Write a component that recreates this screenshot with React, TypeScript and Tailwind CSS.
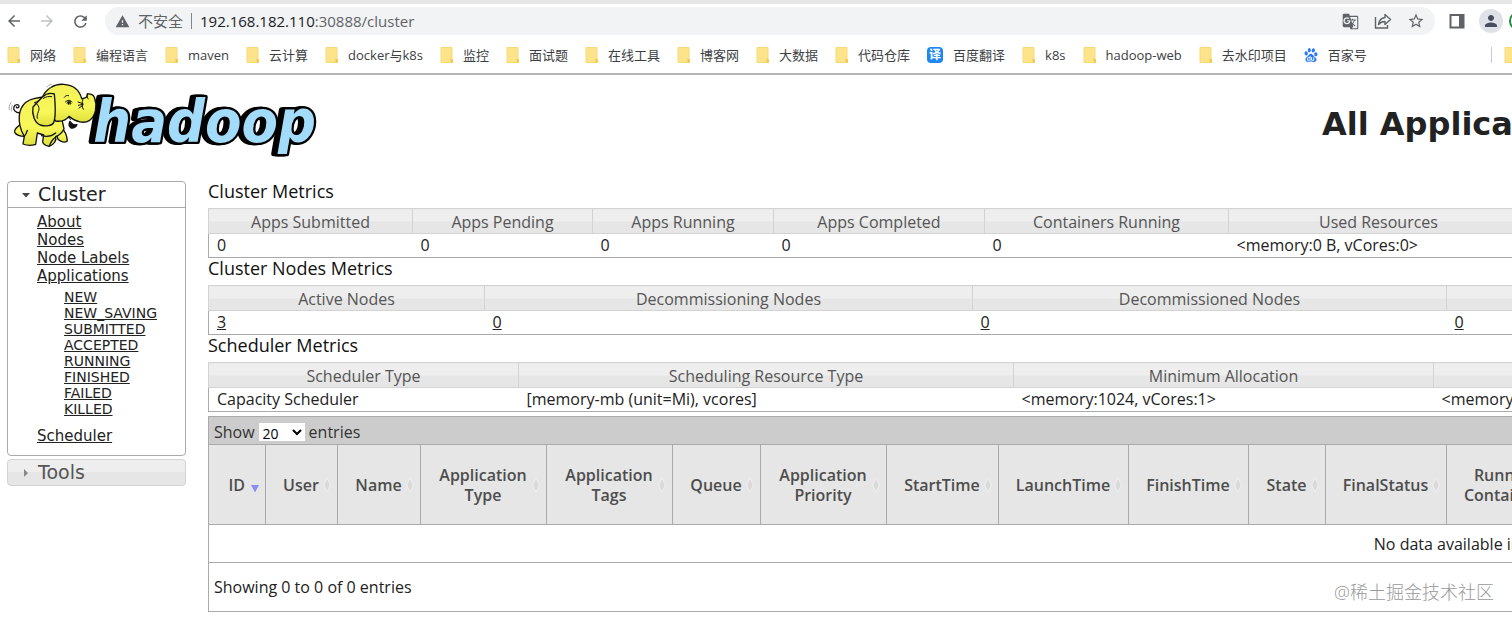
import type { ReactNode } from "react";
import clsx from "clsx";
import {
  MdArrowBack,
  MdArrowForward,
  MdGTranslate,
  MdPerson,
  MdRefresh,
  MdStarBorder,
  MdWarning,
} from "react-icons/md";
import { SiBaidu } from "react-icons/si";

type Bookmark = { label: string; icon?: "folder" | "translate" | "baidu" };

const bookmarks: Bookmark[] = [
  { label: "网络" },
  { label: "编程语言" },
  { label: "maven" },
  { label: "云计算" },
  { label: "docker与k8s" },
  { label: "监控" },
  { label: "面试题" },
  { label: "在线工具" },
  { label: "博客网" },
  { label: "大数据" },
  { label: "代码仓库" },
  { label: "百度翻译", icon: "translate" },
  { label: "k8s" },
  { label: "hadoop-web" },
  { label: "去水印项目" },
  { label: "百家号", icon: "baidu" },
];

const appStates = [
  "NEW",
  "NEW_SAVING",
  "SUBMITTED",
  "ACCEPTED",
  "RUNNING",
  "FINISHED",
  "FAILED",
  "KILLED",
];

type Column = { label: string; width: string; value?: string; link?: boolean };

const clusterMetrics: Column[] = [
  { label: "Apps Submitted", width: "w-[204px]", value: "0" },
  { label: "Apps Pending", width: "w-[180px]", value: "0" },
  { label: "Apps Running", width: "w-[181px]", value: "0" },
  { label: "Apps Completed", width: "w-[211px]", value: "0" },
  { label: "Containers Running", width: "w-[244px]", value: "0" },
  { label: "Used Resources", width: "w-[300px]", value: "<memory:0 B, vCores:0>" },
  { label: "", width: "w-auto" },
];

const nodeMetrics: Column[] = [
  { label: "Active Nodes", width: "w-[276px]", value: "3", link: true },
  { label: "Decommissioning Nodes", width: "w-[488px]", value: "0", link: true },
  { label: "Decommissioned Nodes", width: "w-[474px]", value: "0", link: true },
  { label: "", width: "w-auto", value: "0", link: true },
];

const schedulerMetrics: Column[] = [
  { label: "Scheduler Type", width: "w-[310px]", value: "Capacity Scheduler" },
  {
    label: "Scheduling Resource Type",
    width: "w-[495px]",
    value: "[memory-mb (unit=Mi), vcores]",
  },
  {
    label: "Minimum Allocation",
    width: "w-[420px]",
    value: "<memory:1024, vCores:1>",
  },
  { label: "", width: "w-auto", value: "<memory:8192, vCores:4>" },
];

const appColumns: Column[] = [
  { label: "ID", width: "w-[56px]" },
  { label: "User", width: "w-[72px]" },
  { label: "Name", width: "w-[83px]" },
  { label: "Application Type", width: "w-[126px]" },
  { label: "Application Tags", width: "w-[126px]" },
  { label: "Queue", width: "w-[88px]" },
  { label: "Application Priority", width: "w-[126px]" },
  { label: "StartTime", width: "w-[112px]" },
  { label: "LaunchTime", width: "w-[130px]" },
  { label: "FinishTime", width: "w-[120px]" },
  { label: "State", width: "w-[77px]" },
  { label: "FinalStatus", width: "w-[121px]" },
  { label: "Running Containers", width: "w-[120px]" },
  { label: "", width: "w-auto" },
];

function FolderIcon() {
  return (
    <svg viewBox="0 0 13 16" className="h-4 w-[13px] shrink-0">
      <path d="M1 .5h11v14l.5 1H1z" fill="#fde38a" stroke="#f7d978" />
      <path d="M10.500 15.500v-4l2.500 1v3z" fill="#f2c94c" />
    </svg>
  );
}

function ShareIcon() {
  return (
    <svg viewBox="0 0 18 18" className="size-[18px]" fill="none" stroke="#5f6368" strokeWidth="1.4">
      <path d="M1.500 5v11h12v-3" />
      <path d="M4.500 12.500c.5-4 2.500-6.500 6.500-7V2.500l5.500 5-5.500 5V9.500c-3 0-5 1-6.500 3z" strokeLinejoin="round" />
    </svg>
  );
}

function SidePanelIcon() {
  return (
    <svg viewBox="0 0 16 16" className="size-4">
      <rect x="1.500" y="2" width="13" height="12.500" fill="none" stroke="#5f6368" strokeWidth="2" />
      <path d="M10 2h5v12h-5z" fill="#5f6368" />
    </svg>
  );
}

function Toolbar() {
  return (
    <div className="flex h-[34px] items-center text-[#5f6368]">
      <div className="flex shrink-0 items-center gap-[15px] pr-[15px] pl-[5px]">
        <button aria-label="Back">
          <MdArrowBack className="size-[18px]" />
        </button>
        <button aria-label="Forward" className="text-[#bdc1c6]">
          <MdArrowForward className="size-[18px]" />
        </button>
        <button aria-label="Reload">
          <MdRefresh className="size-[19px]" />
        </button>
      </div>
      <div className="flex h-7 min-w-0 flex-1 items-center rounded-full bg-[#f1f3f4] pr-2.5 pl-2.5">
        <MdWarning className="size-[15px] shrink-0" />
        <span className="ml-2 text-[15px] whitespace-nowrap">不安全</span>
        <span className="mx-2 h-4 w-px shrink-0 bg-[#80868b]" />
        <span className="flex-1 text-[15px] whitespace-nowrap">
          <span className="text-[#202124]">192.168.182.110</span>:30888/cluster
        </span>
        <div className="flex items-center gap-[15px]">
          <button aria-label="Translate">
            <MdGTranslate className="size-[17px]" />
          </button>
          <button aria-label="Share">
            <ShareIcon />
          </button>
          <button aria-label="Bookmark">
            <MdStarBorder className="size-[18px]" />
          </button>
        </div>
      </div>
      <div className="ml-3.5 flex shrink-0 items-center">
        <button aria-label="Side panel">
          <SidePanelIcon />
        </button>
        <button
          aria-label="Profile"
          className="ml-3.5 flex size-6 items-center justify-center rounded-full bg-[#dee1e8] text-[#474d5c]"
        >
          <MdPerson className="size-[18px]" />
        </button>
        <span className="ml-1.5 flex w-[3px] overflow-hidden">
          <span className="size-5 shrink-0 rounded-full border-2 border-[#1e8e3e]" />
        </span>
      </div>
    </div>
  );
}

function BookmarkIcon({ icon }: { icon?: Bookmark["icon"] }) {
  if (icon === "translate") {
    return (
      <span className="flex size-4 items-center justify-center rounded-sm bg-[#1e88f0] text-xs font-bold text-white">
        译
      </span>
    );
  }
  if (icon === "baidu") {
    return <SiBaidu className="size-[14px] text-[#2a7cf0]" />;
  }
  return <FolderIcon />;
}

function BookmarksBar() {
  return (
    <nav className="flex h-[37px] items-center border-b-2 border-[#b4b4b4] pb-0.5 pl-[7px]">
      <div className="flex min-w-0 flex-1 items-center gap-[17px] overflow-hidden">
        {bookmarks.map(({ label, icon }) => (
          <a
            key={label}
            href="#"
            className="flex items-center gap-2.5 text-[13px] leading-5 whitespace-nowrap text-[#3c4043]"
          >
            <BookmarkIcon icon={icon} />
            {label}
          </a>
        ))}
      </div>
      <span className="h-4 w-px shrink-0 bg-[#c8cbd0]" />
      <span className="ml-3 flex w-2 shrink-0 overflow-hidden">
        <FolderIcon />
      </span>
    </nav>
  );
}

function HadoopLogo() {
  return (
    <svg viewBox="0 0 990 270" className="h-[90px] w-[330px] shrink-0" role="img" aria-label="hadoop">
      <defs>
        <linearGradient id="hide" x1="0" y1="0" x2="0" y2="1">
          <stop offset="0" stopColor="#f2f25a" />
          <stop offset="0.6" stopColor="#f7f858" />
          <stop offset="1" stopColor="#dfe03c" />
        </linearGradient>
        <filter id="extrude" x="-10%" y="-10%" width="120%" height="120%">
          <feDropShadow dx="-6" dy="0" stdDeviation="0" floodColor="#000" />
          <feDropShadow dx="-6" dy="0" stdDeviation="0" floodColor="#000" />
        </filter>
      </defs>
      <text
        x="280"
        y="201"
        fontFamily="DejaVu Sans Condensed, DejaVu Sans"
        fontWeight="bold"
        fontStyle="italic"
        fontSize="177"
        fill="#a3dbfb"
        stroke="#000"
        strokeWidth="14"
        strokeLinejoin="round"
        paintOrder="stroke"
        filter="url(#extrude)"
      >
        hadoop
      </text>
      <g fill="url(#hide)" stroke="#111" strokeWidth="4" strokeLinejoin="round" strokeLinecap="round">
        <path d="M60 114c-14-1-22-10-18-19 3-8 15-8 15-1 0 5-7 6-8 2" fill="none" />
        <path d="M183 155c12 12 18 28 19 43-8 6-20 3-28-5l-8-30z" />
        <path d="M62 148c-10 6-21 17-18 24 5 8 17 12 30 12l10-20z" />
        <path d="M60 152c-8-38 3-72 42-81 25-6 52-5 70 4l20 86c-5 12-14 19-25 24 3 11-4 24-20 29-10-2-19-8-19-15l3-19-19-6-5 34c-12 4-28 3-38-1l4-23c-6-10-11-21-13-32z" />
        <path d="M125 182c14 4 31 1 42-8M82 166c-3 10-7 16-10 19M148 213c4-12 12-22 20-28" fill="none" />
        <path d="M210 139c4 8 11 12 21 10-4 9-13 13-20 8-5-4-4-12-1-18z" fill="#111" strokeWidth="4" />
        <path d="M126 68c11-24 34-42 65-40 31 2 48 19 54 43 13-1 18-6 17-14 8-2 18 2 21 10 10 26 4 55-14 69-16 11-42 6-62-12-9 11-22 17-40 14l-38-50z" />
        <path d="M163 57c-12-4-25-1-36 9-10 10-19 21-28 30-4 22 5 48 22 54 16 5 35 3 40-7 7-18 4-65 2-86z" />
        <path d="M126 67c-7 9-15 14-23 16 10 3 18 15 12 27-3 8-5 14-3 20M130 70c8-5 17-7 25-5" fill="none" strokeWidth="3" />
        <path d="M196 81c7-7 15-7 20 0M201 84c5-4 9-4 12 1M193 67c3-5 8-7 13-5M234 81l15 5M235 91l14-3M237 99l12-8M249 72c-4 12-4 22 1 31M262 57c-2 7-1 11 3 15M207 124c-2 4 0 8 5 9" fill="none" strokeWidth="3" />
        <path d="M205 80v7M210 79v8" strokeWidth="4" />
        <path d="M28 104c-2-8 0-15 5-21M35 108c-2-7-1-12 2-17M141 36c3-4 7-7 13-8M146 42l8-6" stroke="#777" fill="none" strokeWidth="2" />
      </g>
    </svg>
  );
}

function Triangle({ open }: { open?: boolean }) {
  return (
    <svg viewBox="0 0 8 8" className="size-2" fill={open ? "#454545" : "#888"}>
      <path d={open ? "M0 2h8L4 6.500z" : "M2 0v8l4-4z"} />
    </svg>
  );
}

function SidebarLink({ children }: { children: ReactNode }) {
  return (
    <li>
      <a href="#" className="underline">
        {children}
      </a>
    </li>
  );
}

function Sidebar() {
  return (
    <aside className="w-[179px] shrink-0 font-['DejaVu_Sans',sans-serif] text-[#222]">
      <div className="rounded border border-[#aaa]">
        <h3 className="border-b border-[#aaa] text-[19px] leading-[25px]">
          <button className="flex w-full items-center gap-2 pl-3.5">
            <Triangle open />
            Cluster
          </button>
        </h3>
        <ul className="pt-[5px] pb-2.5 pl-[29px] text-[15px] leading-[18px]">
          <SidebarLink>About</SidebarLink>
          <SidebarLink>Nodes</SidebarLink>
          <SidebarLink>Node Labels</SidebarLink>
          <SidebarLink>Applications</SidebarLink>
          <li>
            <ul className="pt-1 pb-2.5 pl-[27px] text-sm leading-4">
              {appStates.map((state) => (
                <SidebarLink key={state}>{state}</SidebarLink>
              ))}
            </ul>
          </li>
          <SidebarLink>Scheduler</SidebarLink>
        </ul>
      </div>
      <h3 className="mt-[3px] rounded border border-[#d3d3d3] bg-linear-to-b from-[#eee] from-50% to-[#e6e6e6] to-50% text-[19px] leading-[25px] text-[#555]">
        <button className="flex w-full items-center gap-2 pl-3.5">
          <Triangle />
          Tools
        </button>
      </h3>
    </aside>
  );
}

function MetricsTable({ title, columns }: { title: string; columns: Column[] }) {
  return (
    <section>
      <h3 className="mb-[7px] text-lg leading-5 text-[#111]">{title}</h3>
      <table className="w-[2520px] table-fixed border-collapse border border-[#aaa]">
        <thead>
          <tr className="h-6">
            {columns.map(({ label, width }, i) => (
              <th
                key={i}
                className={clsx(
                  width,
                  "border border-[#d3d3d3] bg-linear-to-b from-[#eee] from-50% to-[#e6e6e6] to-50% px-0 pt-0.5 pb-0 leading-[22px] font-normal text-[#555]",
                )}
              >
                {label}
              </th>
            ))}
          </tr>
        </thead>
        <tbody>
          <tr className="h-6">
            {columns.map(({ value, link }, i) => (
              <td key={i} className="px-2 py-0 leading-[23px] whitespace-nowrap">
                {link ? (
                  <a href="#" className="underline">
                    {value}
                  </a>
                ) : (
                  value
                )}
              </td>
            ))}
          </tr>
        </tbody>
      </table>
    </section>
  );
}

function SortIcon({ active }: { active?: boolean }) {
  return (
    <svg viewBox="0 0 8 16" className="h-4 w-2 shrink-0">
      {active ? (
        <path d="M0 8h8l-4 7.500z" fill="#8c8cf5" />
      ) : (
        <path d="M4 1l3 6v2l-3 6-3-6V7z" fill="#dadada" stroke="#f0f0f0" />
      )}
    </svg>
  );
}

function AppsTable() {
  return (
    <section className="mt-1 w-[2520px] border border-[#aaa]">
      <div className="flex h-[27px] items-center gap-1 bg-[#ccc] pt-0.5 pl-[5px] text-[#333]">
        <label htmlFor="page-size">Show</label>
        <select
          id="page-size"
          defaultValue="20"
          className="h-[18px] w-[46px] bg-white text-sm leading-4 text-black"
        >
          <option>20</option>
          <option>40</option>
          <option>60</option>
        </select>
        <span>entries</span>
      </div>
      <table className="w-full table-fixed border-collapse">
        <thead>
          <tr className="h-20">
            {appColumns.map(({ label, width }, i) => (
              <th
                key={i}
                className={clsx(
                  width,
                  "border border-[#aaa] bg-[#e6e6e6] py-0 pr-1.5 pl-3.5 leading-5 font-semibold text-[#4d4d4d] first:border-l-0 last:border-r-0",
                )}
              >
                {label && (
                  <div className="flex items-center justify-between">
                    <span className="flex-1">{label}</span>
                    <SortIcon active={label === "ID"} />
                  </div>
                )}
              </th>
            ))}
          </tr>
        </thead>
        <tbody>
          <tr className="h-[38px] border-b border-[#aaa]">
            <td colSpan={appColumns.length} className="p-0 text-center">
              No data available in table
            </td>
          </tr>
        </tbody>
      </table>
      <p className="pt-3 pb-3 pl-[5px] leading-6">Showing 0 to 0 of 0 entries</p>
    </section>
  );
}

export default function App() {
  return (
    <div className="relative min-h-screen overflow-hidden bg-white font-['Open_Sans','Noto_Sans_CJK_SC',sans-serif] text-base text-[#222]">
      <header>
        <div className="h-1 bg-[#e6e6e6]" />
        <Toolbar />
        <BookmarksBar />
      </header>
      <div className="flex h-[106px] items-start justify-between">
        <HadoopLogo />
        <h1 className="w-[190px] pt-[29px] font-['DejaVu_Sans',sans-serif] text-[32px] leading-10 font-bold whitespace-nowrap">
          All Applications
        </h1>
      </div>
      <div className="flex items-start gap-[22px] pl-[7px]">
        <Sidebar />
        <main className="min-w-0 flex-1 overflow-hidden">
          <MetricsTable title="Cluster Metrics" columns={clusterMetrics} />
          <MetricsTable title="Cluster Nodes Metrics" columns={nodeMetrics} />
          <MetricsTable title="Scheduler Metrics" columns={schedulerMetrics} />
          <AppsTable />
        </main>
      </div>
      <div className="absolute right-[18px] bottom-4 text-lg leading-6 font-light text-[#999]">
        @稀土掘金技术社区
      </div>
    </div>
  );
}
